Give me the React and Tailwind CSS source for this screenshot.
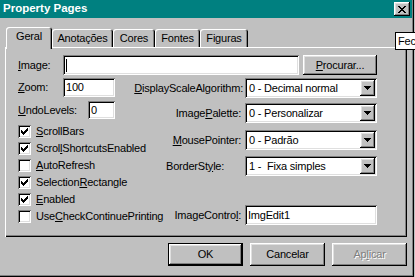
const raised =
  'shadow-[inset_-1px_-1px_0_#000,inset_1px_1px_0_#fff,inset_-2px_-2px_0_#808080,inset_2px_2px_0_#dfdfdf]';
const sunken =
  'shadow-[inset_1px_1px_0_#808080,inset_-1px_-1px_0_#fff,inset_2px_2px_0_#000,inset_-2px_-2px_0_#dfdfdf]';

function CheckMark() {
  return (
    <svg width="7" height="7" viewBox="0 0 7 7" shapeRendering="crispEdges">
      <path d="M0 2H1V3H2V4H3V3H4V2H5V1H6V0H7V3H6V4H5V5H4V6H3V7H2V6H1V5H0Z" fill="#000" />
    </svg>
  );
}

function DownArrow() {
  return (
    <svg width="7" height="4" viewBox="0 0 7 4" shapeRendering="crispEdges">
      <path d="M0 0H7V1H6V2H5V3H4V4H3V3H2V2H1V1H0Z" fill="#000" />
    </svg>
  );
}

function CloseGlyph() {
  return (
    <svg width="8" height="7" viewBox="0 0 8 7" shapeRendering="crispEdges">
      <path
        d="M0 0H2V1H3V2H5V1H6V0H8V1H7V2H6V3H5V4H6V5H7V6H8V7H6V6H5V5H3V6H2V7H0V6H1V5H2V4H3V3H2V2H1V1H0Z"
        fill="#000"
      />
    </svg>
  );
}

function Check({ checked, children }) {
  return (
    <div className="flex h-[17px] items-start">
      <span className={`flex h-[13px] w-[13px] shrink-0 items-center justify-center bg-white ${sunken}`}>
        {checked && <CheckMark />}
      </span>
      <span className="ml-[5px] whitespace-nowrap leading-[13px]">{children}</span>
    </div>
  );
}

function Combo({ value }) {
  return (
    <div className={`flex h-[20px] w-[132px] shrink-0 bg-white p-[2px] ${sunken}`}>
      <span className="flex-1 whitespace-pre pl-[2px] leading-[16px]">{value}</span>
      <span className={`flex w-[15px] items-center justify-center bg-[#c0c0c0] ${raised}`}>
        <DownArrow />
      </span>
    </div>
  );
}

function Tab({ active, className, children }) {
  return (
    <div
      className={`flex items-center justify-center rounded-t-[3px] bg-[#c0c0c0] shadow-[inset_1px_1px_0_#fff,inset_-1px_0_0_#000,inset_-2px_0_0_#808080] ${
        active ? 'relative z-10 -mb-[2px] h-[22px] pb-[3px]' : 'h-[18px]'
      } ${className}`}
    >
      {children}
    </div>
  );
}

export default function App() {
  return (
    <div className="relative h-[277px] w-[415px] overflow-hidden bg-[#c0c0c0] font-['Liberation_Sans',Arial,sans-serif] text-[11px] tracking-[-0.2px] text-black">
      <div className="flex h-[277px] w-[414px] flex-col bg-[#c0c0c0] shadow-[inset_-1px_-1px_0_#000,inset_-2px_-2px_0_#808080]">
        {/* title bar */}
        <div className="mr-[2px] flex h-[18px] items-center bg-[#008080] pl-[3px] pr-[2px]">
          <span className="flex-1 text-[11.5px] font-bold tracking-normal text-white">Property Pages</span>
          <span className={`flex h-[14px] w-[16px] items-center justify-center bg-[#c0c0c0] ${raised}`}>
            <CloseGlyph />
          </span>
        </div>

        {/* tabs */}
        <div className="ml-[6px] mt-[9px] flex h-[20px] items-end">
          <Tab active className="w-[46px]">Geral</Tab>
          <Tab className="w-[61px]">Anotações</Tab>
          <Tab className="w-[42px]">Cores</Tab>
          <Tab className="w-[45px]">Fontes</Tab>
          <Tab className="w-[48px]">Figuras</Tab>
        </div>

        {/* page */}
        <div className="ml-[5px] h-[190px] w-[402px] pl-[13px] pt-[8px] shadow-[inset_1px_1px_0_#fff,inset_-1px_-1px_0_#000,inset_-2px_-2px_0_#808080]">
          <div className="flex h-[20px] items-center">
            <span className="w-[45px]">
              <u>I</u>mage:
            </span>
            <div className={`flex h-[20px] w-[236px] items-center bg-white pl-[3px] ${sunken}`}>
              <span className="h-[13px] w-[1px] bg-black" />
            </div>
            <div className={`ml-[4px] flex h-[20px] w-[74px] items-center justify-center ${raised}`}>
              <span>
                <u>P</u>rocurar...
              </span>
            </div>
          </div>

          <div className="mt-[3px] flex">
            <div className="w-[145px]">
              <div className="flex h-[19px] items-center">
                <span className="w-[45px]">
                  <u>Z</u>oom:
                </span>
                <div className={`flex h-[19px] w-[52px] items-center bg-white pl-[3px] ${sunken}`}>100</div>
              </div>
              <div className="mt-[4px] flex h-[18px] items-center">
                <span className="w-[70px]">
                  <u>U</u>ndoLevels:
                </span>
                <div className={`flex h-[18px] w-[27px] items-center bg-white pl-[3px] ${sunken}`}>0</div>
              </div>
              <div className="mt-[6px] flex flex-col">
                <Check checked>
                  <u>S</u>crollBars
                </Check>
                <Check checked>
                  Scrol<u>l</u>ShortcutsEnabled
                </Check>
                <Check>
                  <u>A</u>utoRefresh
                </Check>
                <Check checked>
                  Selection<u>R</u>ectangle
                </Check>
                <Check checked>
                  <u>E</u>nabled
                </Check>
                <Check>
                  Use<u>C</u>heckContinuePrinting
                </Check>
              </div>
            </div>

            <div className="w-[214px]">
              <div className="flex h-[20px] items-center">
                <span className="flex w-[82px] justify-end whitespace-nowrap pr-[2px]">
                  <span>
                    <u>D</u>isplayScaleAlgorithm:
                  </span>
                </span>
                <Combo value="0 - Decimal normal" />
              </div>
              <div className="mt-[5px] flex h-[20px] items-center">
                <span className="flex w-[82px] justify-end whitespace-nowrap pr-[4px]">
                  <span>
                    Image<u>P</u>alette:
                  </span>
                </span>
                <Combo value="0 - Personalizar" />
              </div>
              <div className="mt-[7px] flex h-[20px] items-center">
                <span className="flex w-[82px] justify-end whitespace-nowrap pr-[4px]">
                  <span>
                    <u>M</u>ousePointer:
                  </span>
                </span>
                <Combo value="0 - Padrão" />
              </div>
              <div className="mt-[6px] flex h-[20px] items-center">
                <span className="flex w-[82px] justify-start whitespace-nowrap pl-[3px]">
                  <span>
                    BorderSt<u>y</u>le:
                  </span>
                </span>
                <Combo value="1 -  Fixa simples" />
              </div>
              <div className="mt-[29px] flex h-[20px] items-center">
                <span className="flex w-[82px] justify-end whitespace-nowrap pr-[4px]">
                  <span>
                    ImageContro<u>l</u>:
                  </span>
                </span>
                <div className={`flex h-[20px] w-[132px] items-center bg-white pl-[3px] ${sunken}`}>ImgEdit1</div>
              </div>
            </div>
          </div>
        </div>

        {/* buttons */}
        <div className="mt-[6px] flex justify-end gap-[7px] pr-[7px]">
          <div className={`flex h-[23px] w-[75px] items-center justify-center border border-black ${raised}`}>OK</div>
          <div className={`flex h-[23px] w-[75px] items-center justify-center ${raised}`}>Cancelar</div>
          <div
            className={`flex h-[23px] w-[75px] items-center justify-center text-[#808080] [text-shadow:1px_1px_0_#fff] ${raised}`}
          >
            <span>
              Ap<u>l</u>icar
            </span>
          </div>
        </div>
      </div>

      {/* tooltip, cut by the window edge */}
      <div className="absolute left-[395px] top-[32px] flex h-[18px] w-[21px] items-center border-y border-l border-black bg-white pl-[2px] whitespace-nowrap">
        Fec
      </div>
    </div>
  );
}
